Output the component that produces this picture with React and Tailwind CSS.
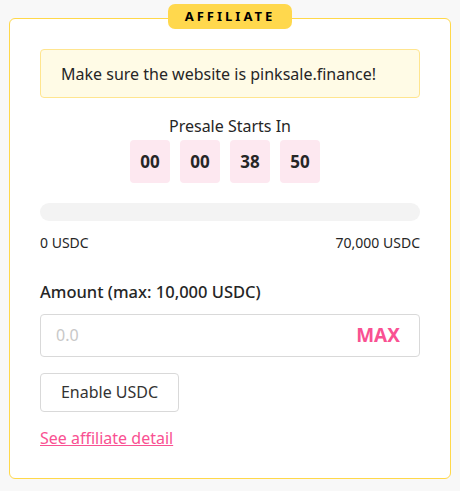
export default function App() {
    const time = ['00', '00', '38', '50'];
    return (
        <div className="w-[460px] h-[491px] bg-[#f8f8f8] pt-[18px] px-[9px] font-['Noto_Sans',sans-serif] text-[#262626]">
            <div className="relative h-[461px] bg-white border border-[#ffd84a] rounded-[6px] px-[30px] pt-[30px]">
                <div className="absolute left-1/2 -translate-x-1/2 -top-[15px] w-[124px] h-[25px] bg-[#ffd84d] rounded-[7px] flex items-center justify-center text-[13px] font-bold tracking-[3px] text-black">
                    AFFILIATE
                </div>
                <div className="h-[49px] bg-[#fffbe6] border border-[#ffe58f] rounded-[4px] flex items-center pl-[20px] text-[16px]">
                    Make sure the website is pinksale.finance!
                </div>
                <div className="mt-[18px] flex flex-col items-center">
                    <div className="text-[16px] leading-[20px]">Presale Starts In</div>
                    <div className="mt-[4px] flex">
                        {time.map((t, i) => (
                            <div key={i} className="w-[40px] h-[43px] mr-[10px] bg-[#fde8f0] rounded-[4px] flex items-center justify-center text-[17px] font-bold">
                                {t}
                            </div>
                        ))}
                    </div>
                </div>
                <div className="mt-[20px] h-[18px] bg-[#f3f3f3] rounded-full"></div>
                <div className="mt-[11px] flex justify-between text-[14px]">
                    <span>0 USDC</span>
                    <span>70,000 USDC</span>
                </div>
                <div className="mt-[27px] text-[16.5px] font-medium">Amount (max: 10,000 USDC)</div>
                <div className="mt-[9px] h-[43px] border border-[#d9d9d9] rounded-[4px] flex items-center justify-between pl-[15px] pr-[19px]">
                    <span className="text-[16px] text-[#c8c8c8]">0.0</span>
                    <span className="text-[19px] font-bold text-[#f95192]">MAX</span>
                </div>
                <button className="mt-[16px] h-[39px] w-[139px] border border-[#d9d9d9] rounded-[4px] text-[16px] text-[#333] bg-white">
                    Enable USDC
                </button>
                <div className="mt-[14px]">
                    <a href="#" className="text-[16px] text-[#f95192] underline">See affiliate detail</a>
                </div>
            </div>
        </div>
    );
}
